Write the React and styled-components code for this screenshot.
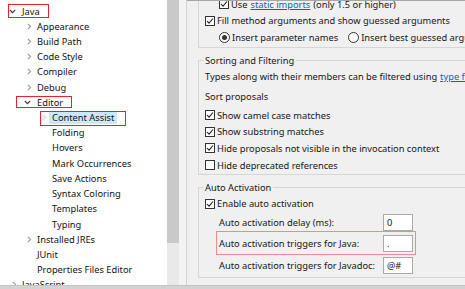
import React from "react";
import styled, { createGlobalStyle } from "styled-components";

const Global = createGlobalStyle`
  html, body { margin: 0; padding: 0; background: #f0f0f0; }
  body { font-family: "Noto Sans", "Noto Sans CJK SC", sans-serif; font-size: 9.3px; color: #161616; }
  * { box-sizing: border-box; }
`;

const Window = styled.div`
  width: 465px;
  height: 289px;
  display: flex;
  flex-direction: column;
  overflow: hidden;
`;

const Main = styled.div`
  height: 285px;
  display: flex;
  overflow: hidden;
`;

const BottomBar = styled.div`
  height: 4px;
  background: #d2d2d2;
  border-top: 1px solid #c4c4c4;
`;

const TreePane = styled.div`
  width: 167px;
  background: #fff;
  overflow: hidden;
  padding-top: 3.4px;
`;

const TreeRow = styled.div`
  height: 15.22px;
  display: flex;
  align-items: center;
  padding-left: ${(p) => 7 + p.$level * 15}px;
  white-space: nowrap;
  color: #111;
`;

const Twisty = styled.span`
  width: 15px;
  height: 100%;
  display: inline-flex;
  align-items: center;
  justify-content: ${(p) => (p.$open ? "flex-start" : "center")};
  padding-left: ${(p) => (p.$open ? "2px" : "0")};
  flex: none;
  opacity: ${(p) => (p.$faint ? 0.35 : 1)};
`;

const Label = styled.span`
  padding: 0 ${(p) => (p.$selected ? "3px" : "0")};
  margin-left: ${(p) => (p.$selected ? "-3px" : "0")};
  background: ${(p) => (p.$selected ? "#cce8ff" : "transparent")};
  line-height: 13px;
`;

const Marked = styled.span`
  position: relative;
  display: inline-flex;
  align-items: center;
  height: 100%;
  &::after {
    content: "";
    position: absolute;
    top: ${(p) => p.$t}px;
    bottom: ${(p) => p.$b}px;
    left: ${(p) => p.$l}px;
    right: ${(p) => p.$r}px;
    border: 1.5px solid #e8222a;
    pointer-events: none;
  }
`;

const VScroll = styled.div`
  width: 12px;
  background: #e9e9e9;
  display: flex;
  flex-direction: column;
`;

const Thumb = styled.div`
  height: 243px;
  background: #c9c9c9;
`;

const Gutter = styled.div`
  width: 8px;
  background: #f3f3f3;
  border-right: 1px solid #d3d3d3;
`;

const Content = styled.div`
  flex: 1;
  background: #f0f0f0;
  border-top: 1px solid #a7a7a7;
  padding-left: 11px;
  overflow: hidden;
  display: flex;
  flex-direction: column;
`;

const Group = styled.div`
  border: 1px solid #d6d6d6;
  margin-right: -30px;
  margin-top: ${(p) => p.$mt}px;
  padding: ${(p) => p.$pt || 0}px 0 ${(p) => p.$pb || 0}px 6px;
  ${(p) => (p.$noTop ? "border-top: none;" : "")}
`;

const Legend = styled.div`
  width: fit-content;
  height: 14px;
  line-height: 14px;
  margin: -7px 0 0 -2px;
  padding: 0 2px;
  background: #f0f0f0;
`;

const Row = styled.div`
  height: 16.6px;
  display: flex;
  align-items: center;
  white-space: nowrap;
  padding-left: ${(p) => p.$indent || 0}px;
  margin-top: ${(p) => p.$mt || 0}px;
`;

const Box = styled.span`
  width: 10px;
  height: 10px;
  border: 1px solid #333;
  background: #fff;
  flex: none;
  margin-right: 2px;
  display: inline-flex;
  align-items: center;
  justify-content: center;
`;

const Radio = styled.span`
  width: 11px;
  height: 11px;
  border-radius: 50%;
  border: 1px solid #333;
  background: #fff;
  flex: none;
  margin-right: 2px;
  display: inline-flex;
  align-items: center;
  justify-content: center;
  &::after {
    content: "";
    width: 5px;
    height: 5px;
    border-radius: 50%;
    background: ${(p) => (p.$on ? "#333" : "transparent")};
  }
`;

const Link = styled.span`
  color: #0066cc;
  text-decoration: underline;
  margin: 0 3px;
`;

const RadioGap = styled.span`
  width: 10px;
  flex: none;
`;

const FieldList = styled.div`
  margin: 1.7px 0 0 14px;
  display: flex;
  flex-direction: column;
  align-items: flex-start;
  gap: 4.5px;
`;

const FieldRow = styled.div`
  position: relative;
  display: grid;
  grid-template-columns: 164px 30px;
  align-items: center;
  height: 17px;
  white-space: nowrap;
  ${(p) =>
    p.$marked
      ? `&::after { content: ""; position: absolute; top: -4px; bottom: -3px; left: -3px; right: -3px; border: 1.5px solid #f08b8b; }`
      : ""}
`;

const Input = styled.div`
  height: 17px;
  width: 30px;
  border: 1px solid #a9a9a9;
  background: #fff;
  padding-left: 3px;
  line-height: 15px;
`;

const Check = () => (
  <svg width="8" height="8" viewBox="0 0 8 8">
    <polyline points="1,4 3,6.2 7,1.5" fill="none" stroke="#222" strokeWidth="1.1" />
  </svg>
);

const Chevron = ({ open, color }) =>
  open ? (
    <svg width="7" height="5" viewBox="0 0 7 5">
      <polyline points="0.8,0.8 3.5,3.6 6.2,0.8" fill="none" stroke={color || "#333"} strokeWidth="1.2" />
    </svg>
  ) : (
    <svg width="5" height="7" viewBox="0 0 5 7">
      <polyline points="0.8,0.8 3.6,3.5 0.8,6.2" fill="none" stroke={color || "#999"} strokeWidth="1.1" />
    </svg>
  );

const CheckRow = ({ checked, children, indent, mt }) => (
  <Row $indent={indent} $mt={mt}>
    <Box>{checked && <Check />}</Box>
    {children}
  </Row>
);

const tree = [
  { label: "Java", level: 0, open: true, mark: { l: 1, r: -9, t: 0.5, b: 1 } },
  { label: "Appearance", level: 1, closed: true },
  { label: "Build Path", level: 1, closed: true },
  { label: "Code Style", level: 1, closed: true },
  { label: "Compiler", level: 1, closed: true },
  { label: "Debug", level: 1, closed: true },
  { label: "Editor", level: 1, open: true, mark: { l: -6, r: -9, t: 1.5, b: 2 } },
  { label: "Content Assist", level: 2, closed: true, faint: true, selected: true, mark: { l: 3, r: -9, t: 1.5, b: -1 } },
  { label: "Folding", level: 2 },
  { label: "Hovers", level: 2 },
  { label: "Mark Occurrences", level: 2 },
  { label: "Save Actions", level: 2 },
  { label: "Syntax Coloring", level: 2 },
  { label: "Templates", level: 2 },
  { label: "Typing", level: 2 },
  { label: "Installed JREs", level: 1, closed: true },
  { label: "JUnit", level: 1 },
  { label: "Properties Files Editor", level: 1 },
  { label: "JavaScript", level: 0, closed: true },
];

const TreeItem = ({ item }) => {
  const inner = (
    <>
      <Twisty $open={item.open} $faint={item.faint}>
        {item.open ? <Chevron open /> : item.closed ? <Chevron /> : null}
      </Twisty>
      <Label $selected={item.selected}>{item.label}</Label>
    </>
  );
  return (
    <TreeRow $level={item.level}>
      {item.mark ? (
        <Marked $l={item.mark.l} $r={item.mark.r} $t={item.mark.t} $b={item.mark.b}>
          {inner}
        </Marked>
      ) : (
        inner
      )}
    </TreeRow>
  );
};

export default function App() {
  return (
    <>
      <Global />
      <Window>
        <Main>
          <TreePane>
            {tree.map((it) => (
              <TreeItem key={it.label} item={it} />
            ))}
          </TreePane>
          <VScroll>
            <Thumb />
          </VScroll>
          <Gutter />
          <Content>
            <Group $mt={-5} $noTop $pb={1.5}>
              <CheckRow checked indent={14}>
                Use<Link>static imports</Link>(only 1.5 or higher)
              </CheckRow>
              <CheckRow checked>Fill method arguments and show guessed arguments</CheckRow>
              <Row $indent={14}>
                <Radio $on />
                Insert parameter names
                <RadioGap />
                <Radio />
                Insert best guessed arguments
              </Row>
            </Group>

            <Group $mt={12} $pb={0.5}>
              <Legend>Sorting and Filtering</Legend>
              <Row>
                Types along with their members can be filtered using<Link>type filters</Link>
              </Row>
              <Row $mt={3.5}>Sort proposals</Row>
              <CheckRow checked mt={2}>Show camel case matches</CheckRow>
              <CheckRow checked>Show substring matches</CheckRow>
              <CheckRow checked>Hide proposals not visible in the invocation context</CheckRow>
              <CheckRow>Hide deprecated references</CheckRow>
            </Group>

            <Group $mt={12} $pb={3}>
              <Legend>Auto Activation</Legend>
              <CheckRow checked mt={0.7}>Enable auto activation</CheckRow>
              <FieldList>
                <FieldRow>
                  <span>Auto activation delay (ms):</span>
                  <Input>0</Input>
                </FieldRow>
                <FieldRow $marked>
                  <span>Auto activation triggers for Java:</span>
                  <Input>.</Input>
                </FieldRow>
                <FieldRow>
                  <span>Auto activation triggers for Javadoc:</span>
                  <Input>@#</Input>
                </FieldRow>
              </FieldList>
            </Group>
          </Content>
        </Main>
        <BottomBar />
      </Window>
    </>
  );
}
